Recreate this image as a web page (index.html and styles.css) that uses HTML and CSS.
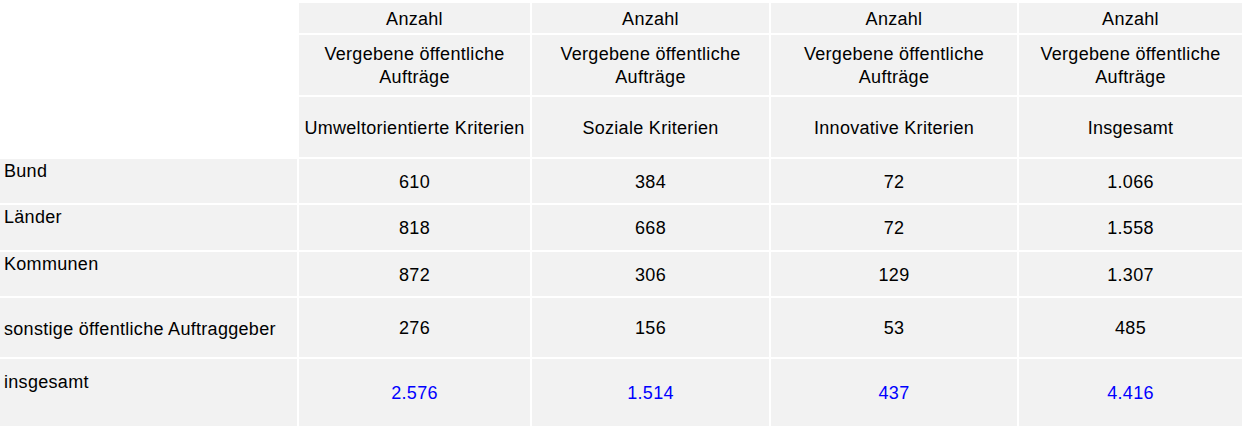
FILE: index.html
```html
<!DOCTYPE html>
<html lang="de">
<head>
<meta charset="utf-8">
<title>Vergebene öffentliche Aufträge</title>
<link rel="stylesheet" href="styles.css">
</head>
<body>
<div class="table">
  <div class="cell corner"></div>
  <div class="cell head">Anzahl</div>
  <div class="cell head">Anzahl</div>
  <div class="cell head">Anzahl</div>
  <div class="cell head">Anzahl</div>

  <div class="cell head">Vergebene öffentliche<br>Aufträge</div>
  <div class="cell head">Vergebene öffentliche<br>Aufträge</div>
  <div class="cell head">Vergebene öffentliche<br>Aufträge</div>
  <div class="cell head">Vergebene öffentliche<br>Aufträge</div>

  <div class="cell head">Umweltorientierte Kriterien</div>
  <div class="cell head">Soziale Kriterien</div>
  <div class="cell head">Innovative Kriterien</div>
  <div class="cell head">Insgesamt</div>

  <div class="cell label">Bund<br>&nbsp;</div>
  <div class="cell num">610</div>
  <div class="cell num">384</div>
  <div class="cell num">72</div>
  <div class="cell num">1.066</div>

  <div class="cell label">Länder<br>&nbsp;</div>
  <div class="cell num">818</div>
  <div class="cell num">668</div>
  <div class="cell num">72</div>
  <div class="cell num">1.558</div>

  <div class="cell label">Kommunen<br>&nbsp;</div>
  <div class="cell num">872</div>
  <div class="cell num">306</div>
  <div class="cell num">129</div>
  <div class="cell num">1.307</div>

  <div class="cell label">sonstige öffentliche Auftraggeber</div>
  <div class="cell num">276</div>
  <div class="cell num">156</div>
  <div class="cell num">53</div>
  <div class="cell num">485</div>

  <div class="cell label">insgesamt<br>&nbsp;</div>
  <div class="cell num total">2.576</div>
  <div class="cell num total">1.514</div>
  <div class="cell num total">437</div>
  <div class="cell num total">4.416</div>
</div>
</body>
</html>
```

FILE: styles.css
```css
html, body {
  margin: 0;
  padding: 0;
  background: #ffffff;
}

body {
  font-family: "Liberation Sans", Arial, sans-serif;
  font-size: 18px;
  line-height: 23px;
  letter-spacing: 0.3px;
  color: #000000;
}

.table {
  display: grid;
  grid-template-columns: 297px 231px 237px 246px 223px;
  grid-template-rows: 30px 60px 60px 44px 45px 44px 59px 67px;
  gap: 2px;
  padding-top: 3px;
}

.cell {
  background: #f2f2f2;
  display: flex;
  align-items: center;
  overflow: hidden;
  padding-top: 2px;
}

.corner {
  grid-row: 1 / span 3;
  background: #ffffff;
}

.head,
.num {
  justify-content: center;
  text-align: center;
}

.label {
  padding-left: 4px;
  padding-top: 3px;
  justify-content: flex-start;
  text-align: left;
}

.total {
  color: #0000ff;
}
```
